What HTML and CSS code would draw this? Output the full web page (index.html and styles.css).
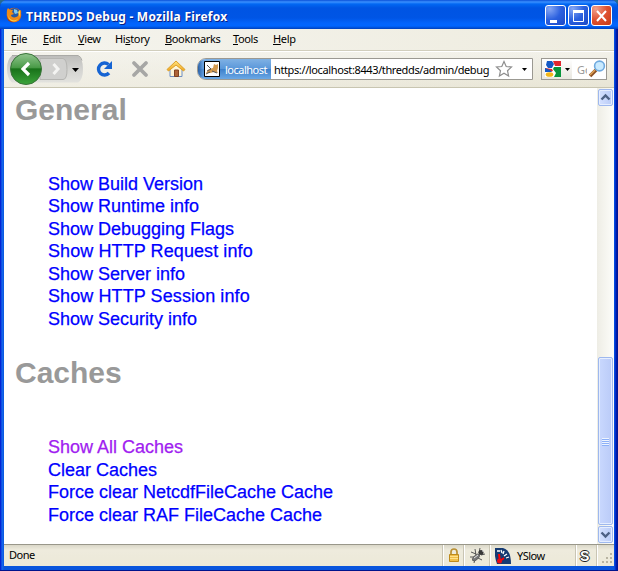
FILE: index.html
```html
<!DOCTYPE html>
<html lang="en">
<head>
<meta charset="utf-8">
<title>THREDDS Debug - Mozilla Firefox</title>
<link rel="stylesheet" href="styles.css">
</head>
<body>
<div class="window">
  <header class="titlebar">
    <svg class="fox" width="16" height="16" viewBox="0 0 16 16"><circle cx="8" cy="8" r="7.3" fill="#e66b0d"/><circle cx="8.5" cy="6.3" r="5.3" fill="#2559a6"/><path d="M8 2l3 1 1 3-3 1-1-2z" fill="#80c9ee"/><path d="M1 3l1-2 2 2h3L6 5l2 2-3 1c0 3 5 3 7 1l1-5 2-1c1 6-2 12-7 12S0 11 1 3z" fill="#f08b18"/><path d="M2 8c1 5 6 7 10 4-3 4-9 3-10-4zM12 5l2-2v7z" fill="#ffd649"/><path d="M1 9c1 4 4 6 8 6-5 1-8-1-8-6z" fill="#a83910"/></svg>
    <span class="title">THREDDS Debug - Mozilla Firefox</span>
    <div class="controls">
      <span class="ctl"><svg width="19" height="20"><path d="M4 14h7v3H4z" fill="#fff"/></svg></span>
      <span class="ctl"><svg width="19" height="20"><path d="M4.500 4.500h10v11h-10z" fill="none" stroke="#fff"/><path d="M4 5.500h11" stroke="#fff" stroke-width="3"/></svg></span>
      <span class="ctl close"><svg width="19" height="20"><path d="M5 5l9 10M14 5L5 15" stroke="#fff" stroke-width="2"/></svg></span>
    </div>
  </header>
  <nav class="menu">
    <span><u>F</u>ile</span><span><u>E</u>dit</span><span><u>V</u>iew</span><span>Hi<u>s</u>tory</span><span><u>B</u>ookmarks</span><span><u>T</u>ools</span><span><u>H</u>elp</span>
  </nav>
  <div class="toolbar">
    <svg class="tools" width="193" height="36" viewBox="4 52 193 36">
      <defs>
        <linearGradient id="pill" x1="0" y1="0" x2="0" y2="1"><stop offset="0" stop-color="#bdbdbb"/><stop offset=".5" stop-color="#d3d3d0"/><stop offset="1" stop-color="#e2e2de"/></linearGradient>
        <linearGradient id="green" x1="0" y1="0" x2="0" y2="1"><stop offset="0" stop-color="#91c58e"/><stop offset=".45" stop-color="#4a9b48"/><stop offset=".5" stop-color="#19721a"/><stop offset="1" stop-color="#3ca43b"/></linearGradient>
        <linearGradient id="roof" x1="0" y1="0" x2="0" y2="1"><stop offset="0" stop-color="#ffe580"/><stop offset="1" stop-color="#f1a51e"/></linearGradient>
      </defs>
      <path d="M12 55.500h66q5 3 5 13.500t-5 13.500H12q-5-4-5-13.500t5-13.500z" fill="url(#pill)"/>
      <path d="M12 55.500h66q3 1 4 5" fill="none" stroke="#aaaaa7"/>
      <path d="M40 58.500h23q4 1 4 11t-4 10H40z" fill="#d0d0ce" stroke="#b5b5b2"/>
      <circle cx="26" cy="69" r="15.500" fill="url(#green)" stroke="#397339"/>
      <path d="M29 63l-6 6 6 6" fill="none" stroke="#fff" stroke-width="3.200"/>
      <path d="M53.500 64l4.500 5-4.500 5" fill="none" stroke="#f4f4f2" stroke-width="3"/>
      <path d="M72 68h7l-3.500 4z" fill="#000"/>
      <path d="M108.500 64.500A6 6 0 1 0 109 73" fill="none" stroke="#1664d3" stroke-width="3.400"/><path d="M112 61v8h-8z" fill="#1664d3"/>
      <path d="M134 63l12 12M146 63l-12 12" stroke="#a7a7a5" stroke-width="3.800" stroke-linecap="round"/>
      <path d="M170 69v7.500h12V69l-6-6z" fill="#fff6d8" stroke="#6f8fc4"/><path d="M174.500 70h4v6.500h-4z" fill="#ae6439" stroke="#814322"/><path d="M176 61l9 8.500-1.500 1.500L176 65l-7.500 6-1.500-1.500z" fill="url(#roof)" stroke="#dca02a"/>
    </svg>
    <div class="address">
      <div class="identity">
        <svg width="16" height="16" viewBox="0 0 16 16"><path d="M.5.500h15v15H.500z" fill="#fff" stroke="#000"/><path d="M2 12l3-4 4-1 1-4 2 1 2-1v4l-1 3 1 2-4-1-4 1z" fill="#d29a50"/><path d="M3 4l4 4-4 2M2 13l4-2M8 10l5 2" fill="none" stroke="#555"/></svg>
        <span>localhost</span>
      </div>
      <span class="url">https://localhost:8443/thredds/admin/debug</span>
      <svg class="star" width="36" height="20" viewBox="494 59 36 20"><path d="M504 61.500l2.200 5 5.300.500-4 3.700 1.100 5.300-4.600-2.800-4.600 2.800 1.100-5.300-4-3.700 5.300-.500z" fill="#fff" stroke="#8e8e8e" stroke-width="1.200"/><path d="M522 68h5l-2.500 3z" fill="#000"/></svg>
    </div>
    <div class="search">
      <svg width="31" height="20" viewBox="0 0 31 20"><defs><linearGradient id="btn" x1="0" y1="0" x2="0" y2="1"><stop offset="0" stop-color="#fff"/><stop offset="1" stop-color="#e8e6df"/></linearGradient></defs><path d="M0 0h30v20H0z" fill="url(#btn)"/><path d="M3 2h16v16H3z" fill="#fff"/><path d="M11 2h8v5h-6zM3 9l7 1 1 2-3 1-5-1z" fill="#e0282f"/><path d="M12 8h7v10h-7l2-4-3-4z" fill="#08943c"/><path d="M5 2h5l2 3-2 4H6L4 6zM3 9l5 2 2 2H3z" fill="#1559c5"/><ellipse cx="7.500" cy="15.500" rx="3.800" ry="2.300" fill="#f2b618"/><path d="M23 9h5l-2.500 3z" fill="#000"/></svg>
      <span class="hint">Go</span>
      <svg class="lens" width="18" height="18" viewBox="0 0 18 18"><path d="M2 16l6-6" stroke="#8c5125" stroke-width="3.500"/><path d="M2 15l5-5" stroke="#e2a456" stroke-width="1.500"/><circle cx="11.500" cy="6" r="4.900" fill="#c9eaff" stroke="#6faadf" stroke-width="1.600"/></svg>
    </div>
  </div>
  <div class="view">
    <main>
      <h1>General</h1>
      <ul>
        <li><a>Show Build Version</a></li><li><a>Show Runtime info</a></li><li><a>Show Debugging Flags</a></li><li><a class="wide">Show HTTP Request info</a></li><li><a>Show Server info</a></li><li><a class="wide">Show HTTP Session info</a></li><li><a>Show Security info</a></li>
      </ul>
      <h1 class="second">Caches</h1>
      <ul>
        <li><a class="visited">Show All Caches</a></li><li><a>Clear Caches</a></li><li><a>Force clear NetcdfFileCache Cache</a></li><li><a>Force clear RAF FileCache Cache</a></li>
      </ul>
    </main>
    <div class="scroll">
      <span class="arrow"><svg width="13" height="15"><path d="M2.500 9.500l4-4 4 4" fill="none" stroke="#4d6185" stroke-width="2.400"/></svg></span>
      <span class="thumb"><i></i><i></i><i></i><i></i></span>
      <span class="arrow"><svg width="13" height="15"><path d="M2.500 5.500l4 4 4-4" fill="none" stroke="#4d6185" stroke-width="2.400"/></svg></span>
    </div>
  </div>
  <footer class="status">
    <span class="done">Done</span>
    <span class="cell lock"><svg width="20" height="20" viewBox="444 545 20 20"><path d="M451 554v-3q0-3 3-3t3 3v3" fill="none" stroke="#b99034" stroke-width="1.700"/><path d="M449.500 553.500h9v7h-9z" fill="#efbe49" stroke="#bd8a1d"/><path d="M450 555.500h8m-8 2h8" stroke="#ffe18a"/></svg></span>
    <span class="cell bug"><svg width="26" height="20" viewBox="464 545 26 20"><path d="M470 551l5 2m-6 3h5m-1 6l1-4m7 1l-4-2m-3-9l1 6m4-7l-1 5m6 1l-4 1" stroke="#444" stroke-width=".9"/><ellipse cx="475" cy="556.500" rx="4.500" ry="2.200" transform="rotate(-42 475 556.500)" fill="#777" stroke="#555" stroke-width=".7"/><circle cx="480" cy="551.500" r="2.500" fill="#383838"/><path d="M473 557l4-3M481 550h2" stroke="#e3e3e3"/></svg></span>
    <span class="cell yslow"><svg width="16" height="16" viewBox="0 0 16 16"><path d="M0 0h8q8 2 8 16H2Q-1 8 0 0z" fill="#153a72"/><path d="M2 3h3M6 2l1 3M9 3l-1 3M12 6l-3 2M14 9l-3 1" stroke="#fff" stroke-width="1.300"/><path d="M4 6l1 8M5 13l4-3" stroke="#f00" stroke-width="2"/><circle cx="4.500" cy="13" r="2.500" fill="#e60b16"/></svg><span>YSlow</span></span>
    <span class="cell noscript"><b>S</b></span>
    <span class="cell grip"><svg width="13" height="19"><path d="M9 7h2v2H9zM5 11h2v2H5zM9 11h2v2H9zM1 15h2v2H1zM5 15h2v2H5zM9 15h2v2H9z" fill="#b8b4a2"/></svg></span>
  </footer>
</div>
</body>
</html>
```
FILE: styles.css
```css
* { box-sizing: border-box; }
body { margin: 0; background: #286a8f; font: 11px "Noto Sans", sans-serif; color: #000; }
svg { display: block; flex: none; }
.window {
  width: 618px; height: 571px; padding: 0 4px 4px; display: flex; flex-direction: column;
  border-radius: 7px 7px 0 0; overflow: hidden;
  background: linear-gradient(90deg, #0019cf 0, #0831d9 1px, #166aee 2px, #0855dd 4px, #0855dd 614px, #0042df 615px, #001eb4 616px, #00138c 618px);
  border-bottom: 1px solid #00138c;
}
.titlebar {
  height: 29px; flex: none; margin: 0 -4px; padding: 0 6px; display: flex; align-items: center;
  background: linear-gradient(#0a50d8 0, #3a90ff 2px, #0268f3 4px, #0054e3 8px, #0055e5 18px, #0364fb 23px, #0166ff 26px, #0040bb 29px);
}
.fox { margin-top: 1px; }
.title { margin: 3px 0 0 4px; white-space: nowrap; font: bold 12px "Noto Sans", sans-serif; letter-spacing: .24px; color: #fff; text-shadow: 1px 1px #0b1f83; }
.controls { margin: 2px 0 0 auto; display: flex; gap: 2px; }
.ctl { width: 21px; height: 21px; border: 1px solid #fff; border-radius: 3px; background: radial-gradient(circle at 20% 15%, #86a7f4, #2b60df 50%, #1a48c5); overflow: hidden; }
.close { background: radial-gradient(circle at 20% 15%, #f2a18c, #df5130 50%, #c83a15); }
.menu {
  height: 23px; flex: none; display: grid; align-items: start; padding: 1px 0 0 7px; line-height: 17px;
  grid-template-columns: 32px 35px 37px 50px 68px 40px 40px; letter-spacing: -.35px;
  background: linear-gradient(90deg, #f5f4ee, #eeecdf); border-bottom: 1px solid #fff; box-shadow: inset 0 -1px #d1cebd;
}
.menu u { text-underline-offset: 1px; }
.toolbar { height: 36px; flex: none; display: flex; align-items: center; background: linear-gradient(90deg, #f5f4ee99, #eeecdf00), linear-gradient(#f2f1e9, #e8e5d5); border-bottom: 1px solid #c8c5b1; }
.address { width: 336px; height: 22px; flex: none; margin-top: -1px; display: flex; align-items: center; background: #fff; border: 1px solid #9b9992; border-radius: 9px 0 0 9px; overflow: hidden; }
.identity { width: 73px; height: 20px; flex: none; display: flex; align-items: center; gap: 5px; padding-left: 6px; color: #fff; background: linear-gradient(90deg, #2b60a3 0, #6aa1df77 5px, #4c8ad000 10px), linear-gradient(#7fb1e4, #5b98da 48%, #3f81cb 52%, #6ba8e5); letter-spacing: -.5px; }
.url { width: 223px; flex: none; padding-left: 3px; white-space: nowrap; letter-spacing: -.38px; }
.search { width: 66px; height: 22px; flex: none; margin: -1px 0 0 8px; display: flex; align-items: center; border: 1px solid #9b9992; background: #fff; }
.hint { width: 10px; flex: none; margin-left: 4px; overflow: hidden; color: #999; }
.lens { margin-left: 1px; }
.view { height: 456px; flex: none; display: flex; background: #fff; }
main { flex: 1; padding: 4px 0 0 11px; font-family: "Liberation Sans", sans-serif; }
h1 { margin: 0; height: 36px; font-size: 30px; line-height: 36px; color: #999; }
.second { margin-top: 24.5px; }
ul { list-style: none; margin: 0; padding: 44.5px 0 0 33px; font-size: 18px; line-height: 22.5px; }
.second + ul { padding-top: 45.5px; }
li { white-space: nowrap; }
a { color: #00f; -webkit-text-stroke: .25px currentColor; }
.wide { letter-spacing: .09px; }
.visited { color: #a020f0; }
.scroll { width: 17px; padding: 1px; display: flex; flex-direction: column; background: linear-gradient(90deg, #eeede5, #fdfdfa); }
.arrow, .thumb { border: 1px solid #9eb8ee; border-radius: 2px; background: linear-gradient(90deg, #d5e1ff, #b9cbf7); box-shadow: inset 0 0 0 1px #e6eeff; }
.arrow { height: 17px; flex: none; }
.thumb { height: 168px; margin: auto 0 1px; display: flex; flex-direction: column; justify-content: center; align-items: center; gap: 1px; background: linear-gradient(90deg, #c9d8fe, #bacbf8); }
.thumb i { width: 7px; height: 1px; background: #eef4fe; box-shadow: 0 1px #8cb0f8; }
.status { height: 22px; flex: none; display: flex; align-items: stretch; background: linear-gradient(#dad7c8, #eeebdd 5px, #ece9d8); border-top: 1px solid #99978a; line-height: 20px; }
.done { flex: 1; padding-left: 5px; letter-spacing: -.5px; }
.cell { border-left: 1px solid #fff; box-shadow: -1px 0 #c9c5b4; display: flex; align-items: center; }
.lock { width: 21px; }
.bug { width: 26px; }
.yslow { width: 86px; padding-left: 4px; gap: 6px; letter-spacing: -.5px; }
.noscript { width: 21px; padding-left: 2px; color: #fff; text-shadow: 1px 0 #222, -1px 0 #222, 0 1px #222, 0 -1px #222; }
.noscript b { font: bold 14px/20px "Liberation Sans", sans-serif; margin-left: 1px; }
.grip { width: 17px; padding-left: 3px; }
```
